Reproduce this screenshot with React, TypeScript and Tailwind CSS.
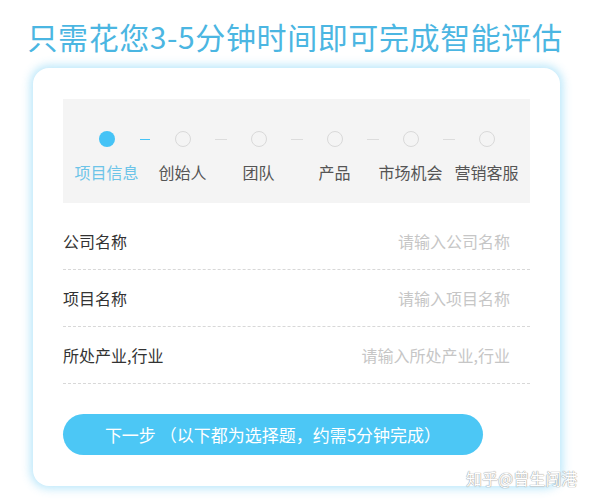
import React from 'react';

const steps = ['项目信息', '创始人', '团队', '产品', '市场机会', '营销客服'];

const fields = [
  { label: '公司名称', placeholder: '请输入公司名称' },
  { label: '项目名称', placeholder: '请输入项目名称' },
  { label: '所处产业,行业', placeholder: '请输入所处产业,行业' },
];

const font = { fontFamily: '"Noto Sans CJK SC", "Noto Sans", sans-serif' };

export default function App() {
  const current = 0;

  return (
    <div className="relative w-[590px] h-[504px] bg-white overflow-hidden" style={font}>
      <h1 className="pt-[16px] text-center text-[30px] leading-[40px] font-normal tracking-[0.6px] text-[#4bb6e2]">
        只需花您3-5分钟时间即可完成智能评估
      </h1>

      {/* Card */}
      <div className="mt-[12px] ml-[33px] w-[527px] h-[418px] rounded-[16px] bg-white px-[30px] pt-[31px] shadow-[0_0_9px_3px_rgba(110,205,245,0.45)]">
        {/* Steps */}
        <div className="h-[104px] bg-[#f4f4f4] flex flex-col items-center pt-[32px]">
          <div className="flex items-center">
            {steps.map((s, i) => (
              <React.Fragment key={s}>
                <div
                  className={
                    i === current
                      ? 'w-[16px] h-[16px] rounded-full bg-[#45c3f6]'
                      : 'w-[16px] h-[16px] rounded-full border border-[#d9d9d9]'
                  }
                />
                {i < steps.length - 1 && (
                  <div className="w-[60px] flex justify-center">
                    <div
                      className={
                        i === current ? 'w-[10px] h-px bg-[#45c3f6]' : 'w-[12px] h-px bg-[#dcdcdc]'
                      }
                    />
                  </div>
                )}
              </React.Fragment>
            ))}
          </div>
          <div className="flex mt-[15px]">
            {steps.map((s, i) => (
              <div
                key={s}
                className={
                  i === current
                    ? 'w-[76px] text-center text-[16px] leading-[20px] text-[#6dc4e8]'
                    : 'w-[76px] text-center text-[16px] leading-[20px] text-[#555555]'
                }
              >
                {s}
              </div>
            ))}
          </div>
        </div>

        {/* Fields */}
        <div className="mt-[10px]">
          {fields.map((f) => (
            <div
              key={f.label}
              className="h-[57px] flex items-center justify-between border-b border-dashed border-[#d8d8d8] pr-[20px]"
            >
              <span className="text-[16px] text-[#333333]">{f.label}</span>
              <span className="text-[16px] text-[#c6c6c6]">{f.placeholder}</span>
            </div>
          ))}
        </div>

        <button className="mt-[30px] w-[420px] h-[41px] rounded-full bg-[#4cc7f5] text-white text-[17px] flex items-center justify-center">
          下一步 （以下都为选择题，约需5分钟完成）
        </button>
      </div>

      {/* Watermark */}
      <div className="absolute left-[466px] top-[467px] whitespace-nowrap text-[16px] leading-[22px] text-white [text-shadow:0_0_1px_#8a8a8a,0_0_1px_#8a8a8a] opacity-90">
        知乎@曾生闯港
      </div>
    </div>
  );
}
